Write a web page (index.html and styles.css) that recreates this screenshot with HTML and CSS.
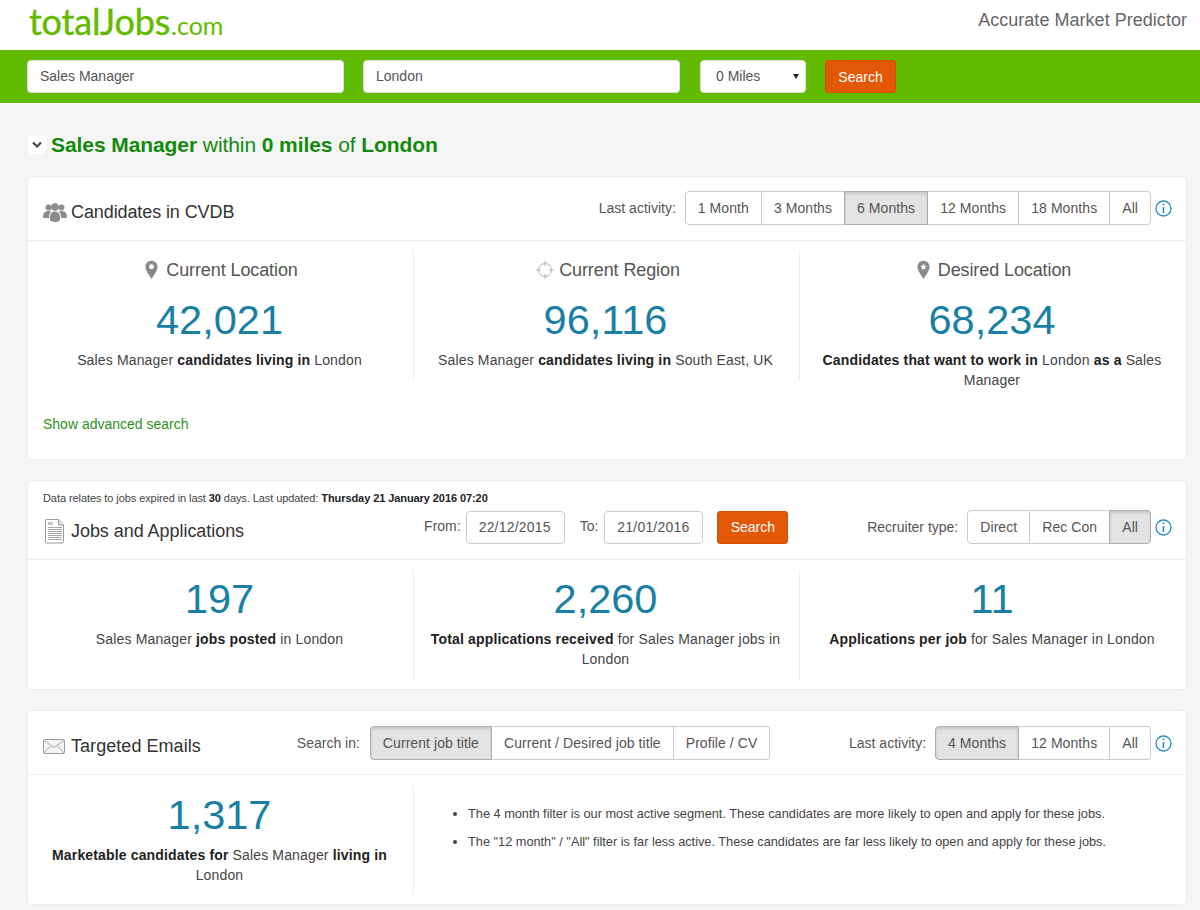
FILE: index.html
```html
<!DOCTYPE html>
<html lang="en">
<head>
<meta charset="utf-8">
<title>Accurate Market Predictor</title>
<link rel="stylesheet" href="styles.css">
</head>
<body>
<header class="topbar">
  <div class="logo">total<span class="logo-j">Jobs</span><span class="logo-com">.com</span></div>
  <div class="tagline">Accurate Market Predictor</div>
</header>
<form class="searchbar">
  <div class="field field-text">Sales Manager</div>
  <div class="field field-text">London</div>
  <div class="field field-select"><span>0 Miles</span><span class="caret"></span></div>
  <button type="button" class="btn-search">Search</button>
</form>
<main class="content">
  <h1 class="headline">
    <span class="toggle"><svg width="10" height="8" viewBox="0 0 10 8"><path d="M1 1.500 5 5.500 9 1.500" fill="none" stroke="#444" stroke-width="2.200"/></svg></span>
    <span><b>Sales Manager</b> within <b>0 miles</b> of <b>London</b></span>
  </h1>

  <section class="card card-cvdb">
    <div class="card-head head-cvdb">
      <h2 class="title">
        <svg class="ico" width="24" height="20" viewBox="0 0 24 20"><g fill="#8c8c8c"><circle cx="5.500" cy="5.500" r="3"/><circle cx="18.500" cy="5.500" r="3"/><path d="M0 15c0-4 2-6 5.500-6 1 0 2 .2 2.800.7C6.500 11 6 13 6 16H1.500C.6 16 0 15.700 0 15zM24 15c0-4-2-6-5.500-6-1 0-2 .2-2.800.7 1.800 1.300 2.300 3.300 2.300 6.300h4.500c.9 0 1.500-.3 1.500-1z"/><circle cx="12" cy="5" r="3.800"/><path d="M6.800 17c0-5 1.800-7.500 5.200-7.500s5.200 2.500 5.200 7.500c0 2-2.500 3-5.200 3s-5.200-1-5.200-3z"/></g></svg>
        Candidates in CVDB
      </h2>
      <div class="controls">
        <span class="ctl-label">Last activity:</span>
        <div class="btn-group">
          <span class="seg">1 Month</span><span class="seg">3 Months</span><span class="seg seg-on">6 Months</span><span class="seg">12 Months</span><span class="seg">18 Months</span><span class="seg">All</span>
        </div>
        <svg class="info" width="17" height="17" viewBox="0 0 17 17"><circle cx="8.500" cy="8.500" r="7.500" fill="none" stroke="#2a8fc0" stroke-width="1.300"/><path d="M7.700 3.500h1.600v1.700H7.700zM7.700 7h1.600v6H7.700z" fill="#2a8fc0"/></svg>
      </div>
    </div>
    <div class="stats stats-cvdb">
      <div class="stat">
        <h3 class="stat-title"><svg class="pin" width="13" height="20" viewBox="0 0 14 20"><path d="M7 0C3 0 .5 3 .5 6.500.5 11 5 16 7 20c2-4 6.500-9 6.500-13.500C13.500 3 11 0 7 0z" fill="#8a8a8a"/><circle cx="7" cy="6.500" r="2.600" fill="#fff"/></svg>Current Location</h3>
        <div class="num">42,021</div>
        <p class="desc">Sales Manager <b>candidates living in</b> London</p>
      </div>
      <div class="stat">
        <h3 class="stat-title"><svg class="pin pin-cross" width="20" height="20" viewBox="0 0 20 20"><g fill="none" stroke="#b4b4b4" stroke-width="1"><circle cx="10" cy="10" r="6.500"/><path d="M10 1v5M10 14v5M1 10h5M14 10h5"/></g></svg>Current Region</h3>
        <div class="num">96,116</div>
        <p class="desc">Sales Manager <b>candidates living in</b> South East, UK</p>
      </div>
      <div class="stat">
        <h3 class="stat-title"><svg class="pin" width="13" height="20" viewBox="0 0 14 20"><path d="M7 0C3 0 .5 3 .5 6.500.5 11 5 16 7 20c2-4 6.500-9 6.500-13.500C13.500 3 11 0 7 0z" fill="#8a8a8a"/><path d="m7 3.200 1.100 2.300 2.400.3-1.800 1.600.5 2.400L7 8.600 4.800 9.800l.5-2.400-1.800-1.600 2.400-.3z" fill="#fff"/></svg>Desired Location</h3>
        <div class="num">68,234</div>
        <p class="desc"><b>Candidates that want to work in</b> London <b>as a</b> Sales<br>Manager</p>
      </div>
    </div>
    <a class="adv-link" href="#">Show advanced search</a>
  </section>

  <section class="card card-jobs">
    <p class="note">Data relates to jobs expired in last <b>30</b> days. Last updated: <b>Thursday 21 January 2016 07:20</b></p>
    <div class="card-head head-jobs">
      <h2 class="title">
        <svg class="ico ico-doc" width="20" height="25" viewBox="0 0 20 25"><path d="M1.500.5h12l5 5.500v16.500a1.500 1.500 0 0 1-1.500 1.500H1.500A1 1 0 0 1 .5 23V1.500a1 1 0 0 1 1-1z" fill="#fff" stroke="#999"/><path d="M13.500.5v5.500h5" fill="#e4e4e4" stroke="#999"/><path d="M3 8.500h14M3 10.500h14M3 12.500h14M3 14.500h14M3 16.500h14M3 18.500h14M3 20.500h14" stroke="#a8a8a8"/><path d="M3 3h5v3H3z" fill="#c8c8c8"/></svg>
        Jobs and Applications
      </h2>
      <div class="dates">
        <span class="ctl-label">From:</span><span class="date">22/12/2015</span>
        <span class="ctl-label label-to">To:</span><span class="date">21/01/2016</span>
        <button type="button" class="btn-search btn-dates">Search</button>
      </div>
      <div class="controls">
        <span class="ctl-label">Recruiter type:</span>
        <div class="btn-group">
          <span class="seg">Direct</span><span class="seg">Rec Con</span><span class="seg seg-on">All</span>
        </div>
        <svg class="info" width="17" height="17" viewBox="0 0 17 17"><circle cx="8.500" cy="8.500" r="7.500" fill="none" stroke="#2a8fc0" stroke-width="1.300"/><path d="M7.700 3.500h1.600v1.700H7.700zM7.700 7h1.600v6H7.700z" fill="#2a8fc0"/></svg>
      </div>
    </div>
    <div class="stats stats-jobs">
      <div class="stat"><div class="num">197</div><p class="desc">Sales Manager <b>jobs posted</b> in London</p></div>
      <div class="stat"><div class="num">2,260</div><p class="desc"><b>Total applications received</b> for Sales Manager jobs in London</p></div>
      <div class="stat"><div class="num">11</div><p class="desc"><b>Applications per job</b> for Sales Manager in London</p></div>
    </div>
  </section>

  <section class="card card-emails">
    <div class="card-head head-emails">
      <h2 class="title">
        <svg class="ico" width="22" height="15" viewBox="0 0 22 15"><rect x=".5" y=".5" width="21" height="14" rx="1.500" fill="#f4f4f4" stroke="#999"/><path d="M1 1.500 11 8.500l10-7M1 14l7-7.500M21 14l-7-7.500" fill="none" stroke="#aaa"/></svg>
        Targeted Emails
      </h2>
      <div class="controls ctl-search">
        <span class="ctl-label">Search in:</span>
        <div class="btn-group">
          <span class="seg seg-on">Current job title</span><span class="seg">Current / Desired job title</span><span class="seg">Profile / CV</span>
        </div>
      </div>
      <div class="controls">
        <span class="ctl-label">Last activity:</span>
        <div class="btn-group">
          <span class="seg seg-on">4 Months</span><span class="seg">12 Months</span><span class="seg">All</span>
        </div>
        <svg class="info" width="17" height="17" viewBox="0 0 17 17"><circle cx="8.500" cy="8.500" r="7.500" fill="none" stroke="#2a8fc0" stroke-width="1.300"/><path d="M7.700 3.500h1.600v1.700H7.700zM7.700 7h1.600v6H7.700z" fill="#2a8fc0"/></svg>
      </div>
    </div>
    <div class="email-body">
      <div class="stat"><div class="num">1,317</div><p class="desc"><b>Marketable candidates for</b> Sales Manager <b>living in</b> London</p></div>
      <ul class="notes">
        <li>The 4 month filter is our most active segment. These candidates are more likely to open and apply for these jobs.</li>
        <li>The "12 month" / "All" filter is far less active. These candidates are far less likely to open and apply for these jobs.</li>
      </ul>
    </div>
  </section>
</main>
</body>
</html>
```
FILE: styles.css
```css
* { box-sizing: border-box; }
html, body { margin: 0; padding: 0; }
body {
  background: #f5f5f5;
  color: #333;
  font-family: "Liberation Sans", Arial, sans-serif;
  font-size: 14px;
  height: 910px;
  overflow: hidden;
}
.topbar {
  height: 50px;
  background: #fff;
  display: flex;
  justify-content: space-between;
  padding: 0 13px 0 29px;
}
.logo {
  font-family: "Lato", "Noto Sans", sans-serif;
  font-weight: 400;
  font-size: 36px;
  line-height: 42px;
  color: #62bb00;
  letter-spacing: -0.2px;
  -webkit-text-stroke: 0.4px #62bb00;
}
.logo-com { font-size: 25px; letter-spacing: 0; -webkit-text-stroke: 0; margin-left: 1px; }
.tagline {
  font-size: 18px;
  line-height: 40px;
  color: #666;
  letter-spacing: 0.03px;
}
.searchbar {
  height: 53px;
  background: #62bb00;
  margin: 0;
  padding: 10px 27px;
  display: flex;
  gap: 19px;
}
.field {
  height: 33px;
  background: #fff;
  border: 1px solid #ddd;
  border-radius: 4px;
  color: #555;
  line-height: 31px;
  padding: 0 12px;
}
.field-text { width: 317px; }
.field-select {
  width: 106px;
  margin-left: 1px;
  padding: 0 6px 0 15px;
  display: flex;
  justify-content: space-between;
  align-items: center;
}
.caret {
  width: 0;
  height: 0;
  border-left: 3.500px solid transparent;
  border-right: 3.500px solid transparent;
  border-top: 5px solid #222;
}
.btn-search {
  height: 33px;
  width: 71px;
  background: #e45706;
  border: 1px solid #d14e04;
  border-radius: 3px;
  color: #fff;
  font: inherit;
  padding: 0;
}
.content { padding: 0 13px 0 27px; }
.headline {
  margin: 0;
  height: 73px;
  display: flex;
  align-items: center;
  gap: 5px;
  padding-top: 10px;
  font-size: 21px;
  letter-spacing: -0.08px;
  font-weight: 400;
  color: #138a0c;
}
.toggle {
  width: 18px;
  height: 18px;
  margin-left: 1px;
  background: #fff;
  border-radius: 3px;
  display: flex;
  align-items: center;
  justify-content: center;
}
.card {
  background: #fff;
  border: 1px solid #eee;
  border-radius: 5px;
  margin-bottom: 20px;
}
.card-cvdb { height: 284px; }
.card-jobs { height: 210px; }
.card-emails { height: 195px; }
.card-head {
  display: flex;
  align-items: center;
  border-bottom: 1px solid #eee;
  padding: 0 14px 0 15px;
}
.head-cvdb { height: 64px; }
.head-jobs { height: 55px; }
.head-emails { height: 64px; }
.title {
  margin: 7px 0 0;
  font-size: 18px;
  font-weight: 400;
  letter-spacing: -0.1px;
  color: #333;
  display: flex;
  align-items: center;
  gap: 4px;
}
.head-jobs .title { margin-top: -2px; letter-spacing: -0.05px; }
.head-emails .title { gap: 6px; letter-spacing: 0.05px; }
.ico { flex: none; }
.ico-doc { margin: 0 2px 0 2px; }
.controls {
  display: flex;
  align-items: center;
  margin-left: auto;
  margin-top: -1px;
}
.head-jobs .controls { margin-top: -10px; }
.head-emails .controls { margin-top: 1px; }
.head-emails .ctl-search { margin-left: 96px; }
.ctl-label { color: #555; }
.controls .ctl-label { margin-right: 9px; }
.controls.ctl-search .ctl-label { margin-right: 10px; }
.btn-group {
  display: flex;
  height: 34px;
}
.seg {
  border: 1px solid #ccc;
  border-left-width: 0;
  background: #fff;
  padding: 0 12px;
  line-height: 32px;
  letter-spacing: 0.07px;
  color: #555;
  white-space: nowrap;
}
.seg:first-child {
  border-left-width: 1px;
  border-radius: 4px 0 0 4px;
}
.seg:last-child { border-radius: 0 4px 4px 0; }
.seg-on {
  background: #e3e3e3;
  border-color: #adadad;
  border-left-width: 1px;
  margin-left: -1px;
  box-shadow: inset 0 2px 3px rgba(0, 0, 0, .12);
}
.seg-on:first-child { margin-left: 0; }
.info { margin-left: 4px; }
.stats {
  display: grid;
  grid-template-columns: 386px 386px 1fr;
  padding-top: 9px;
}
.stats-jobs { padding-top: 10px; }
.stats-cvdb .stat { height: 130px; }
.stats-jobs .stat { height: 110px; }
.stat {
  padding: 0 16px 0 14px;
  text-align: center;
  border-right: 1px solid #eee;
}
.stat:last-child { border-right: 0; }
.stat-title {
  margin: 0;
  height: 40px;
  padding-left: 4px;
  font-size: 18px;
  font-weight: 400;
  letter-spacing: -0.1px;
  color: #555;
  display: flex;
  align-items: center;
  justify-content: center;
  gap: 8px;
}
.pin { flex: none; }
.pin-cross { margin-right: -4px; }
.num {
  font-size: 41.500px;
  line-height: 48px;
  color: #1a7fa5;
  margin-top: 6px;
}
.stats-jobs .num { margin-top: 5px; }
.desc {
  margin: 6px 0 0;
  line-height: 20px;
  letter-spacing: 0.15px;
  color: #444;
}
.desc b { color: #222; }
.adv-link {
  display: block;
  margin: 34px 0 0 15px;
  color: #2f8f1d;
  text-decoration: none;
  line-height: 20px;
}
.note {
  margin: 0;
  padding: 10px 15px 0;
  height: 24px;
  font-size: 11px;
  letter-spacing: -0.08px;
  line-height: 14px;
  color: #444;
}
.note b { color: #222; }
.dates {
  display: flex;
  align-items: center;
  margin-left: 180px;
  margin-top: -10px;
}
.dates .ctl-label { margin-top: -2px; margin-right: 5px; }
.dates .label-to { margin-left: 15px; margin-right: 6px; }
.date {
  height: 33px;
  width: 99px;
  border: 1px solid #ccc;
  border-radius: 4px;
  line-height: 31px;
  padding-left: 12px;
  letter-spacing: 0.2px;
  color: #555;
}
.btn-dates { margin-left: 14px; }
.email-body {
  display: grid;
  grid-template-columns: 386px 1fr;
  padding-top: 10px;
}
.email-body .stat { height: 110px; }
.notes {
  margin: 0;
  padding: 20px 0 0 54px;
  font-size: 12.750px;
  line-height: 17px;
  color: #444;
}
.notes li { margin-bottom: 11px; }
```
